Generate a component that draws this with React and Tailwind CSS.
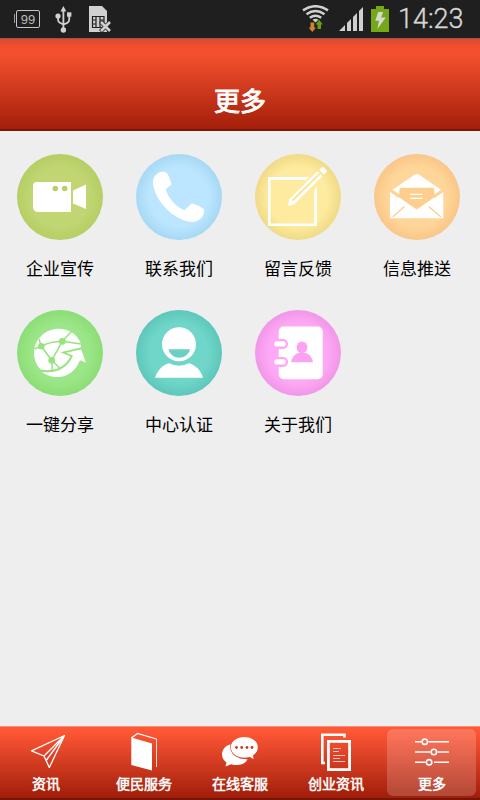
const services = [
    { label: "企业宣传", icon: CameraIcon, bg: "bg-[radial-gradient(circle,#c1d673_48%,#b5ce64_71%)]" },
    { label: "联系我们", icon: PhoneIcon, bg: "bg-[radial-gradient(circle,#bce6ff_48%,#a6d8f4_71%)]" },
    { label: "留言反馈", icon: NoteIcon, bg: "bg-[radial-gradient(circle,#ffeb9f_48%,#f0da87_71%)]" },
    { label: "信息推送", icon: MailIcon, bg: "bg-[radial-gradient(circle,#ffd699_48%,#f9c688_71%)]" },
    { label: "一键分享", icon: ShareIcon, bg: "bg-[radial-gradient(circle,#9be688_48%,#8bdd75_71%)]" },
    { label: "中心认证", icon: PersonIcon, bg: "bg-[radial-gradient(circle,#70d6ca_48%,#5dc7ba_71%)]" },
    { label: "关于我们", icon: ContactsIcon, bg: "bg-[radial-gradient(circle,#fea9f6_48%,#f097e7_71%)]" },
];

const tabs = [
    { label: "资讯", icon: PlaneIcon, labelClass: "pr-1" },
    { label: "便民服务", icon: BookIcon },
    { label: "在线客服", icon: ChatIcon },
    { label: "创业资讯", icon: DocsIcon },
    { label: "更多", icon: SlidersIcon, active: true },
];

function CameraIcon() {
    return (
        <svg width="86" height="86" viewBox="0 0 86 86" fill="#fff">
            <path d="M20 28H54V58H20Q16 57 16 53V32Q16 28 20 28Z" />
            <path d="M56 36.5L69 30.5V55L56 49.5Z" />
            <circle cx="38.3" cy="34.5" r="2.8" fill="#b9d068" />
            <circle cx="47.7" cy="34.5" r="2.8" fill="#b9d068" />
        </svg>
    );
}

function PhoneIcon() {
    return (
        <svg width="86" height="86" viewBox="0 0 86 86" fill="#fff">
            <path d="M20.5 20.5C23 17.5 29 16.5 31.5 20C33.5 23 34.5 27 35.6 30.3L29.8 35.3C32 44 40 53 48.3 56.3L56 49.3Q62 51 68 55.3C68 59 67.5 62 65.3 64C62 67.5 57 68.5 52 67.5C40 65 28 55 21.5 43C18.5 37 16.8 31 17 27.5C17.2 24 18.5 22 20.5 20.5Z" />
        </svg>
    );
}

function NoteIcon() {
    return (
        <svg width="86" height="86" viewBox="0 0 86 86" fill="#fff">
            <path d="M13 23H54L51 26H15.5V69.5H59.2V36L62 33V72H13Z" />
            <path d="M33 52L34.3 45.3L62.3 17.2L67.3 22.2L39.3 50.3Z" />
            <path d="M37.5 46.5L64.5 19.8" stroke="#f9e594" strokeWidth="1.8" />
            <path d="M64.2 15.7L67 13.2Q68 12.6 69 13.6L71.5 16.2Q72.3 17 71.5 18L68.7 20.5Z" />
        </svg>
    );
}

function MailIcon() {
    return (
        <svg width="86" height="86" viewBox="0 0 86 86" fill="#fff">
            <path d="M18.5 35.8L40 21Q42.7 19 45.5 21L67 35.8L61 40H25Z" />
            <path d="M16 37L42.7 55.5L69.3 37V64.3H16Z" />
            <path d="M25.3 43V36Q25.3 33.7 27.8 33.7H58Q60.3 33.7 60.3 36V43L45 53.8Q42.7 55.2 40.4 53.8Z" fill="#fdce8d" />
            <path d="M16 37L25.3 43.4M69.3 37L60.3 43.4" stroke="#fdce8d" strokeWidth="1.2" />
            <path d="M36 40.4H48.7M36 44.3H48.7" stroke="#fff" strokeWidth="1.2" />
            <path d="M18.7 63L30.5 52.5M67 63L54.6 52.5" stroke="#fdce8d" strokeWidth="1.3" />
        </svg>
    );
}

function ShareIcon() {
    return (
        <svg width="86" height="86" viewBox="0 0 86 86" fill="#fff">
            <path d="M64 33.5C60 23 50 18 40 18.7C27 20 17 30 17 43C17 50 20 57 25 60.5C34 63 45 62 51 54L54 46L46 42.3L64 38.8Z" />
            <path d="M46.3 42.5L64.2 39.2L68.8 52.5L63 50.2C59 61 50 67 41 67C34 67 28 65 24.7 61.5C38 64.5 50 59.5 55 46.5Z" />
            <g stroke="#96e37f" strokeWidth="1.5" fill="none">
                <path d="M17.5 39L24.3 36.3M45.3 31.3L64 34M45.3 31.3L54.5 21.5M45.3 31.3L34.7 50.3L24.3 36.3L22 29M34.7 50.3L43 58.5M34.7 50.3L35.5 62" />
                <path d="M24.3 36.3Q33 31.5 45.3 31.3" />
                <path d="M24 60.5Q46 64 54.7 46L46.3 42.5L65 38.2" strokeWidth="1.8" />
            </g>
            <g fill="#96e37f">
                <circle cx="24.3" cy="36.3" r="3.2" />
                <circle cx="45.3" cy="31.3" r="3.4" />
                <circle cx="34.7" cy="50.3" r="3.4" />
            </g>
        </svg>
    );
}

function PersonIcon() {
    return (
        <svg width="86" height="86" viewBox="0 0 86 86" fill="#fff">
            <circle cx="43" cy="34.3" r="17" />
            <path d="M32.5 39.3H54C51.5 50.5 35 50.5 32.5 39.3Z" fill="#6ad0c3" />
            <path d="M19 67.7C22 59.5 27 54.8 33 53.3Q43 58 53.2 53.3C60 55.5 65 60.5 67 67.7Z" />
        </svg>
    );
}

function ContactsIcon() {
    return (
        <svg width="86" height="86" viewBox="0 0 86 86" fill="#fff">
            <rect x="23.7" y="16.5" width="44" height="52.8" rx="5" />
            <rect x="18" y="29" width="15" height="10" rx="5" fill="#fda7f5" />
            <rect x="18" y="47" width="15" height="10" rx="5" fill="#fda7f5" />
            <rect x="19.2" y="31.3" width="11.5" height="5.2" rx="2.6" />
            <rect x="19.2" y="49.3" width="11.5" height="5.2" rx="2.6" />
            <g fill="#fba3f2">
                <ellipse cx="47" cy="37.4" rx="5.4" ry="5.8" />
                <path d="M36 52.3C37 46.5 41 43.2 44 42.7H50C54 43.5 57.5 47.5 58 52.3Z" />
            </g>
        </svg>
    );
}

function PlaneIcon() {
    return (
        <svg width="48" height="48" viewBox="0 0 48 48" fill="none" stroke="#fff" strokeWidth="1.3" strokeLinejoin="round">
            <path d="M40.5 7.5L7.5 22.8L20 28L25.3 39.5ZM20 28L40.5 7.5L22.5 32" />
        </svg>
    );
}

function BookIcon() {
    return (
        <svg width="48" height="48" viewBox="0 0 48 48">
            <path d="M11.3 9.5L32 15.5V42.5L11.3 37Z" fill="#fff" />
            <path d="M11.3 10L17.5 5.5L36.5 11" fill="none" stroke="#fff" strokeWidth="1.3" />
            <path d="M36.5 11V39" stroke="#fff" strokeWidth="0.8" />
        </svg>
    );
}

function ChatIcon() {
    return (
        <svg width="48" height="48" viewBox="0 0 48 48">
            <path d="M14.5 16.3C8.5 18 5 23 6.3 28.5C7 31.5 8.5 33 10.5 34.5L9.5 38.5L15 36.2C23 38.5 29.5 36 31.5 31.2C21 31.5 12.5 25.5 14.5 16.3Z" fill="#fff" />
            <ellipse cx="28.3" cy="19.3" rx="13.5" ry="10.4" fill="#fff" />
            <path d="M32 28L37.5 31L36.8 25Z" fill="#fff" />
            <g fill="#d5371c">
                <circle cx="20.5" cy="19.5" r="1.4" />
                <circle cx="25.7" cy="19.5" r="1.4" />
                <circle cx="31" cy="19.5" r="1.4" />
                <circle cx="36" cy="19.5" r="1.4" />
            </g>
        </svg>
    );
}

function DocsIcon() {
    return (
        <svg width="48" height="48" viewBox="0 0 48 48">
            <path d="M13 35H10.3V6.7H32.5V9.5" fill="none" stroke="#fff" strokeWidth="2.6" />
            <rect x="16.4" y="13.4" width="21.2" height="28.2" fill="none" stroke="#fff" strokeWidth="2.8" />
            <path d="M21 20.5H29M21 23.5H27M21 27.5H33M21 30.5H28M21 33.5H33" stroke="#f7c2b7" strokeWidth="1" />
        </svg>
    );
}

function SlidersIcon() {
    return (
        <svg width="48" height="48" viewBox="0 0 48 48" fill="none" stroke="#fff" strokeWidth="1.6">
            <path d="M7 13.7H13.5M20.5 13.7H41M7 24H22.5M29.5 24H41M7 34.3H17.5M26 34.3H41" />
            <circle cx="16.8" cy="13.7" r="2.7" />
            <circle cx="25.9" cy="24" r="2.7" />
            <circle cx="21.1" cy="34.3" r="2.7" />
        </svg>
    );
}

function StatusBar() {
    return (
        <div className="flex h-[38px] bg-[#1f1f1f] pl-3.5 pr-4">
            <div className="mr-px mt-[14px] h-[9px] w-px bg-[#999]" />
            <div className="mt-2.5 flex h-[18px] w-6 items-center justify-center rounded-xs border border-[#c4c4c4] pt-px font-['Liberation_Sans',sans-serif] text-[13px] leading-none text-[#bbb]">
                99
            </div>
            <svg className="ml-[15px] mt-1.5" width="17" height="27" viewBox="0 0 17 27" fill="#d0d0d0">
                <path d="M8.4 0L11.3 5.5H5.5Z" />
                <path d="M8.4 4V24M3 10V13.5Q3 16 5 16.8L8.4 18.5L12.3 16.8Q14.2 16 14.2 13.5V9" fill="none" stroke="#d0d0d0" strokeWidth="1.8" />
                <circle cx="3" cy="10" r="2.6" />
                <rect x="12" y="6.3" width="4.4" height="4.4" />
                <circle cx="8.4" cy="24" r="2.7" />
            </svg>
            <svg className="ml-[17px] mt-1.5" width="22" height="26" viewBox="0 0 22 26">
                <path d="M0 0H13L18 5V26H0Z" fill="#d0d0d0" />
                <path d="M3.5 10.5H15V21.5H3.5ZM7 10.5V21.5M11 10.5V21.5M3.5 14H7M3.5 18H7M11 14H15" fill="none" stroke="#1f1f1f" strokeWidth="1.2" />
                <path d="M11.5 15.5L21.5 25.5M21.5 15.5L11.5 25.5" stroke="#1f1f1f" strokeWidth="4.2" />
                <path d="M12 16L21 25M21 16L12 25" stroke="#d0d0d0" strokeWidth="2.7" />
            </svg>

            <svg className="ml-auto mt-[5px]" width="27" height="27" viewBox="0 0 27 27">
                <g fill="none" stroke="#d0d0d0" strokeWidth="2.5">
                    <path d="M1 5.4Q13.5 -3 26 5.4" />
                    <path d="M4.5 9.2Q13.5 3 22.5 9.2" />
                    <path d="M7.8 12.7Q13.5 8.7 19.2 12.7" />
                </g>
                <path d="M10.5 14.7Q13.5 12.7 16.5 14.7L13.5 17.5Z" fill="#d0d0d0" />
                <path d="M8.5 17.5H12.2V22.5H14L10.3 27L6.6 22.5H8.5Z" fill="#d18532" />
                <path d="M15.5 24V19.5H13.6L17.2 14.7L20.9 19.5H19V24Z" fill="#669e11" />
            </svg>
            <svg className="ml-2.5 mt-[7px]" width="24" height="24" viewBox="0 0 24 24" fill="#d0d0d0">
                <path d="M0 24L6 18V24ZM8 16L12 12V24H8ZM14 10L18 6V24H14ZM20 4L24 0V24H20Z" />
            </svg>
            <svg className="ml-2 mt-1.5" width="18" height="26" viewBox="0 0 18 26">
                <path d="M5 0H13V3H18V26H0V3H5Z" fill="#74a818" />
                <path d="M7.2 6H12.2L10 11.5H14.8L6.4 23L8 14.8H4.3Z" fill="#d5d9cf" />
            </svg>
            <span className="ml-2 w-[67px] whitespace-nowrap pl-px font-[Roboto,sans-serif] text-[27px] font-light leading-[39px] text-[#d6d6d6] [-webkit-text-stroke:0.35px_#d6d6d6]">14:23</span>
        </div>
    );
}

export default function App() {
    return (
        <div className="flex h-[800px] w-[480px] flex-col overflow-hidden bg-[#eeeeee] font-['Noto_Sans_CJK_SC',sans-serif]">
            <StatusBar />

            <header className="flex h-[93px] items-end justify-center border-b-2 border-t border-b-[#7e1205] border-t-[#94564a] bg-[linear-gradient(#dc4b30_0px,#f4502f_10px,#f4502f_16px,#a31f09_100%)] pb-[11px]">
                <h1 className="text-[26px] leading-9 text-white [-webkit-text-stroke:0.9px_#fff]">更多</h1>
            </header>

            <main className="grid flex-1 auto-rows-[156px] grid-cols-[repeat(4,119px)] content-start pt-[23px]">
                {services.map(({ label, icon: Icon, bg }) => (
                    <div key={label} className="flex flex-col items-center pl-px">
                        <div className={`size-[86px] overflow-hidden rounded-full ${bg}`}>
                            <Icon />
                        </div>
                        <span className="mt-[15px] text-[17px] leading-[26px] text-black">{label}</span>
                    </div>
                ))}
            </main>

            <nav className="flex h-[74px] border-b-2 border-t border-b-[#751407] border-t-[#f98a73] bg-[linear-gradient(#ff5a38,#fb5434_10%,#a01e0a)]">
                {tabs.map(({ label, icon: Icon, active, labelClass = "" }) => (
                    <div key={label} className="w-24 pl-[3px] pt-0.5">
                        <div className={`flex h-[67px] w-[89px] flex-col items-center rounded-md pl-px ${active ? "bg-white/18" : ""}`}>
                            <div className="-mt-px">
                                <Icon />
                            </div>
                            <span className={`-mt-[3px] text-sm leading-5 text-white [-webkit-text-stroke:0.5px_#fff] ${labelClass}`}>
                                {label}
                            </span>
                        </div>
                    </div>
                ))}
            </nav>
        </div>
    );
}
